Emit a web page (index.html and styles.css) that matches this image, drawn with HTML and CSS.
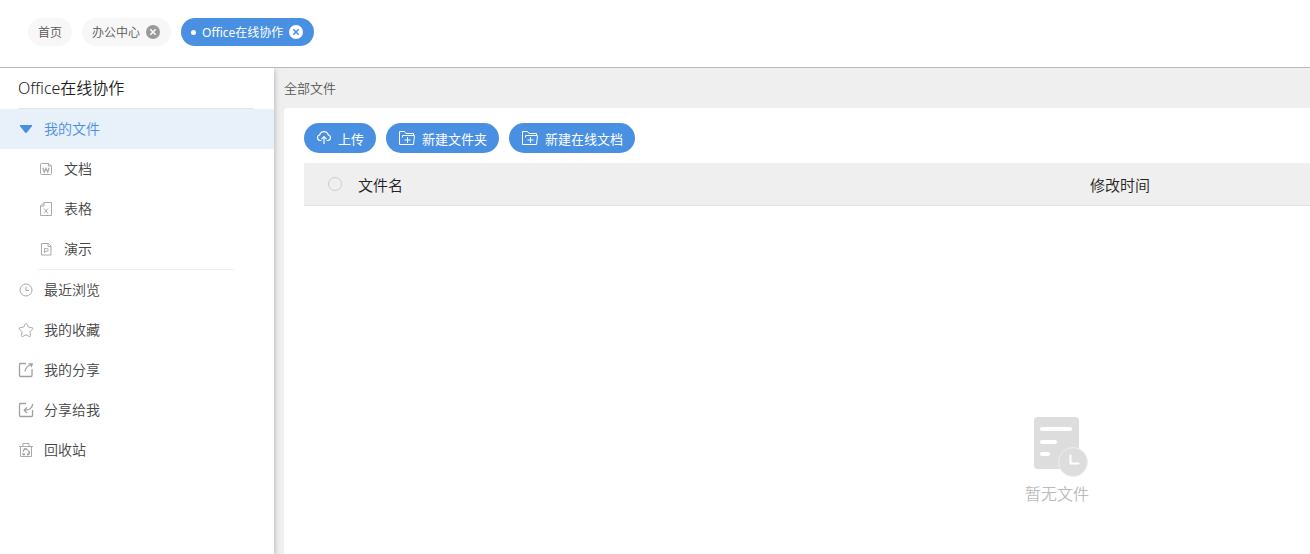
FILE: index.html
```html
<!DOCTYPE html>
<html lang="zh-CN">
<head>
  <meta charset="UTF-8" />
  <meta name="viewport" content="width=device-width, initial-scale=1.0" />
  <title>Office在线协作</title>
  <link rel="stylesheet" href="styles.css">
</head>
<body>
  <header class="topbar">
    <nav class="tabs">
      <div class="tab"><a href="#">首页</a></div>
      <div class="tab">
        <a href="#">办公中心</a>
        <button class="tab-close" type="button" aria-label="关闭">
          <svg viewBox="0 0 14 14"><circle cx="7" cy="7" r="7"/><path d="M4.300 4.300l5.400 5.400M9.700 4.300l-5.400 5.400"/></svg>
        </button>
      </div>
      <div class="tab active">
        <span class="dot"></span>
        <a href="#">Office在线协作</a>
        <button class="tab-close" type="button" aria-label="关闭">
          <svg viewBox="0 0 14 14"><circle cx="7" cy="7" r="7"/><path d="M4.300 4.300l5.400 5.400M9.700 4.300l-5.400 5.400"/></svg>
        </button>
      </div>
    </nav>
  </header>

  <div class="layout">
    <aside class="sidebar">
      <h1 class="sidebar-title">Office在线协作</h1>
      <nav class="menu">
        <a class="menu-item active" href="#">
          <svg class="icon" viewBox="0 0 16 16"><path class="solid" d="M2.500 4h11q1.200 0 .4 1.200L9.200 11.300q-1.200 1.200-2.400 0L2.100 5.200Q1.300 4 2.500 4z"/></svg>
          <span>我的文件</span>
        </a>
        <div class="submenu">
          <a class="menu-item" href="#">
            <svg class="icon" viewBox="0 0 16 16"><path d="M3.500 2.500h7.500l2.500 2.500v7.500q0 1-1 1h-9q-1 0-1-1v-9q0-1 1-1zM10.500 2.500v2.500h3"/><path class="letter" d="M4.800 6.800l1.500 4.200L8 7.500l1.700 3.500 1.500-4.200"/></svg>
            <span>文档</span>
          </a>
          <a class="menu-item" href="#">
            <svg class="icon" viewBox="0 0 16 16"><path d="M6 1.500h7.500v13h-11V5zM6 1.500V5H2.500"/><path d="M6 7.500l4 5M10 7.500l-4 5"/></svg>
            <span>表格</span>
          </a>
          <a class="menu-item" href="#">
            <svg class="icon" viewBox="0 0 16 16"><path d="M3.500 2.500h7l2.500 2.500v9H3.500zM10 2.500v3h3"/><path d="M6.500 12V7.500h2.300a1.400 1.400 0 0 1 0 2.800H6.500"/></svg>
            <span>演示</span>
          </a>
        </div>
        <a class="menu-item" href="#">
          <svg class="icon" viewBox="0 0 16 16"><circle cx="8" cy="8" r="6"/><path d="M8 4.500V8.500h3"/></svg>
          <span>最近浏览</span>
        </a>
        <a class="menu-item" href="#">
          <svg class="icon" viewBox="0 0 16 16"><path d="M8 1.500q.6 0 .9.700l1.400 2.800 3.700.7q1.500.4.5 1.500l-2.500 2.500.5 4q0 1.200-1.200.8L8 12.800l-3.300 1.700q-1.200.4-1.200-.8l.5-4L1.500 7.200q-1-1.100.5-1.500L5.700 5l1.400-2.800q.3-.7.9-.7z"/></svg>
          <span>我的收藏</span>
        </a>
        <a class="menu-item" href="#">
          <svg class="icon strong" viewBox="0 0 16 16"><path d="M8 1.500H2.500q-1 0-1 1v11q0 1 1 1h10.500q1 0 1-1V7M7 9.500q.5-5 6.500-7M10.500 1.800h3.700l-1 3.200"/></svg>
          <span>我的分享</span>
        </a>
        <a class="menu-item" href="#">
          <svg class="icon strong" viewBox="0 0 16 16"><path d="M8 1.500H2.500q-1 0-1 1v11q0 1 1 1h11q1 0 1-1V8M14.800 2q-.8 6-8 6.200M9 5.500L6.200 8.200 9 11"/></svg>
          <span>分享给我</span>
        </a>
        <a class="menu-item" href="#">
          <svg class="icon" viewBox="0 0 16 16"><path d="M1 4.500h14M5 4.500v-3h6v3M2.500 4.500v10h11v-10"/><path class="mark" d="M5 9.500l1.500-2.500h2l1 1.500M10.500 8.500l1 2.500-1 1.500H9M7 12.500H5.500l-1-1.500"/></svg>
          <span>回收站</span>
        </a>
      </nav>
    </aside>

    <main class="content">
      <div class="crumb">全部文件</div>
      <section class="card">
        <div class="inner">
          <div class="toolbar">
            <button class="btn" type="button">
              <svg class="cloud" viewBox="0 0 16 16"><path d="M5.500 10.500H4a2.800 2.800 0 0 1-.4-5.500A4.500 4.500 0 0 1 12.300 5a2.800 2.800 0 0 1-.3 5.500h-1.500M8 14V7M5.500 9.200L8 6.700l2.500 2.500"/></svg>
              上传
            </button>
            <button class="btn" type="button">
              <svg class="folder" viewBox="0 0 18 16"><path d="M1.500 14.500v-13h5l1.500 2h7.500v2M1.500 14.500h14l1-9h-12v2M9.500 7v6M6.500 10h6"/></svg>
              新建文件夹
            </button>
            <button class="btn" type="button">
              <svg class="folder" viewBox="0 0 18 16"><path d="M1.500 14.500v-13h5l1.500 2h7.500v2M1.500 14.500h14l1-9h-12v2M9.500 7v6M6.500 10h6"/></svg>
              新建在线文档
            </button>
          </div>
          <table class="files">
            <thead>
              <tr>
                <th class="col-check"><input type="checkbox" aria-label="全选"></th>
                <th class="col-name">文件名</th>
                <th>修改时间</th>
              </tr>
            </thead>
          </table>
          <div class="empty">
            <svg viewBox="0 0 62 60">
              <rect x="8" width="45" height="52" rx="4" fill="#ddd"/>
              <path d="M16 12h28M16 25h13M16 37h6" stroke="#fff" stroke-width="4" stroke-linecap="round"/>
              <circle cx="47" cy="45" r="14.500" fill="#ddd" stroke="#eee"/>
              <path d="M44.500 38.500v8h8" fill="none" stroke="#fff" stroke-width="2" stroke-linecap="round"/>
            </svg>
            <p>暂无文件</p>
          </div>
        </div>
      </section>
    </main>
  </div>
</body>
</html>
```
FILE: styles.css
```css
:root {
  --blue: #4a90e2;
  --blue-light: #e8f0fa;
  --gray-bg: #efefef;
  --text: #222;
  --text-mid: #555;
  --icon: #aaa;
}

* { box-sizing: border-box; }
html, body { height: 100%; margin: 0; }
body {
  display: flex;
  flex-direction: column;
  overflow: hidden;
  font-family: "Noto Sans", "Noto Sans CJK SC", sans-serif;
  font-size: 14px;
  font-weight: 350;
  color: var(--text);
  background: #fff;
}
a { color: inherit; text-decoration: none; }
button { font-family: inherit; font-weight: 400; border: 0; cursor: pointer; }
svg { display: block; flex: none; }

/* top tabs */
.topbar { flex: none; padding: 18px 28px 21px; border-bottom: 1px solid #bbb; }
.tabs { display: flex; gap: 10px; }
.tab {
  display: flex;
  align-items: center;
  gap: 6px;
  height: 28px;
  padding: 0 11px 0 10px;
  border-radius: 14px;
  font-size: 12px;
  color: var(--text-mid);
  background: #f7f7f7;
}
.tab:first-child { padding-right: 10px; }
.tab.active { font-weight: 400; color: #fff; background: var(--blue); }
.dot { width: 5px; height: 5px; border-radius: 50%; background: #fff; }
.tab-close { padding: 0; background: none; }
.tab-close svg { width: 14px; height: 14px; }
.tab-close circle { fill: #999; }
.tab-close path { stroke: #fff; stroke-width: 1.5; }
.tab.active circle { fill: #fff; }
.tab.active path { stroke: var(--blue); }

.layout { flex: 1; display: flex; min-height: 0; overflow: hidden; }

/* left menu */
.sidebar { position: relative; z-index: 1; flex: none; width: 274px; background: #fff; box-shadow: 0 2px 6px rgba(0,0,0,.3); }
.sidebar-title {
  margin: 0 20px 0 18px;
  font-size: 16px;
  font-weight: 350;
  line-height: 40px;
  border-bottom: 1px solid #e4e4e4;
}
.menu-item {
  display: flex;
  align-items: center;
  gap: 10px;
  height: 40px;
  padding-left: 18px;
  color: #444;
}
.menu-item span { padding-bottom: 2px; }
.menu-item.active { color: var(--blue); background: var(--blue-light); }
.icon { width: 16px; height: 16px; fill: none; stroke: var(--icon); }
.icon.strong { stroke: #a0a0a0; stroke-width: 1.3; }
.icon .letter { stroke-width: 1.3; }
.icon .mark { stroke: #999; stroke-width: 1.3; }
.icon .solid { fill: var(--blue); stroke: none; }
.submenu { margin: 0 40px 0 38px; border-bottom: 1px solid #f0f0f0; }
.submenu .menu-item { padding-left: 0; }

/* file list */
.content { flex: 1; display: flex; flex-direction: column; min-width: 0; padding-left: 10px; background: var(--gray-bg); }
.crumb { font-size: 13px; line-height: 40px; color: var(--text-mid); }
.card { flex: 1; overflow: hidden; padding: 15px 0 0 20px; border-top-left-radius: 4px; background: #fff; }
.inner { min-width: 1506px; }
.toolbar { display: flex; gap: 10px; margin-bottom: 10px; }
.btn {
  display: flex;
  align-items: center;
  gap: 6px;
  height: 30px;
  padding: 0 12px;
  border-radius: 15px;
  font-size: 13px;
  color: #fff;
  background: var(--blue);
}
.btn svg { height: 16px; fill: none; stroke: #fff; }
.btn .cloud { width: 16px; stroke-width: 1.2; }
.btn .folder { width: 18px; }

.files { width: 100%; border-collapse: separate; border-spacing: 0; table-layout: fixed; }
.files th {
  height: 43px;
  padding: 0;
  font-size: 15px;
  font-weight: 350;
  text-align: left;
  background: var(--gray-bg);
  border-bottom: 1px solid #e2e2e2;
}
.files .col-check { width: 54px; padding-left: 24px; }
.files .col-name { width: 732px; }
.files input {
  display: block;
  appearance: none;
  width: 14px;
  height: 14px;
  margin: 0;
  border: 1px solid #ccc;
  border-radius: 50%;
}

.empty { display: flex; flex-direction: column; align-items: center; gap: 4px; padding-top: 211px; color: #bbb; }
.empty svg { width: 62px; height: 60px; }
.empty p { margin: 0; font-size: 16px; line-height: 26px; }
```
